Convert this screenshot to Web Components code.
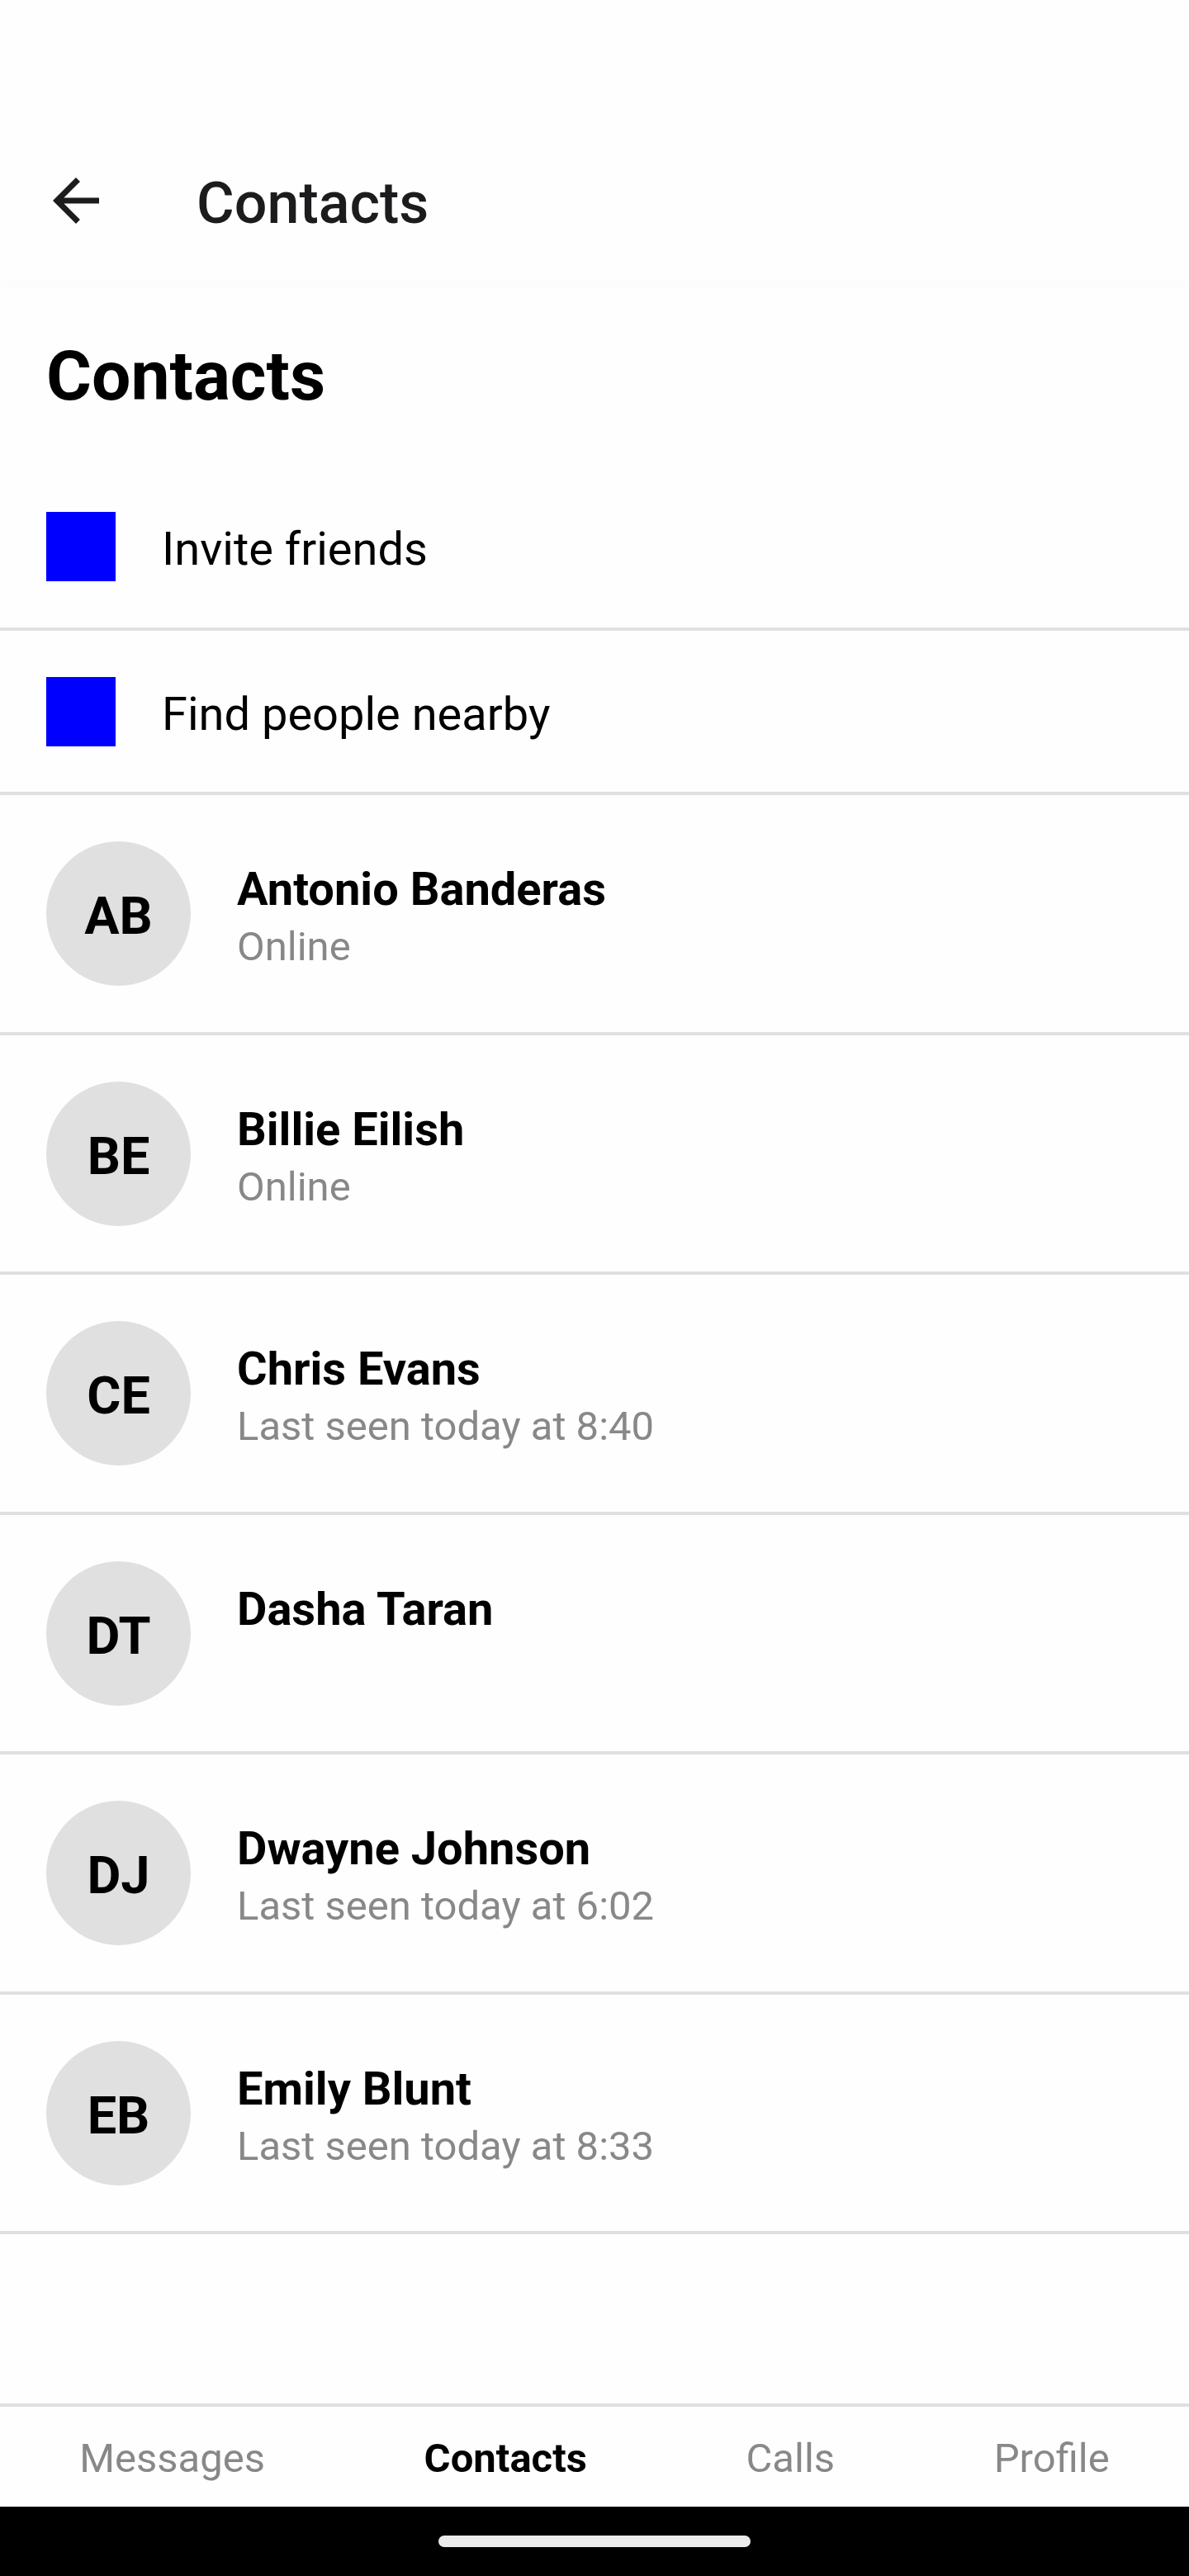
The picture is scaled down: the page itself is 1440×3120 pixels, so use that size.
<!DOCTYPE html>
<html lang="en">
<head>
<meta charset="utf-8">
<meta name="viewport" content="width=device-width, initial-scale=1">
<title>Contacts</title>
<style>
  body {
    margin: 0;
    background: #fefefe;
    color: #000;
    font-family: Roboto, "Liberation Sans", sans-serif;
    --line: #e0e0e0;
    --muted: #888;
    --gap: 56px;
  }
</style>
</head>
<body>
<app-screen>
  <app-header slot="header">Contacts</app-header>
  <contact-list heading="Contacts">
    <action-row>Invite friends</action-row>
    <action-row>Find people nearby</action-row>
    <contact-row initials="AB" name="Antonio Banderas">Online</contact-row>
    <contact-row initials="BE" name="Billie Eilish">Online</contact-row>
    <contact-row initials="CE" name="Chris Evans">Last seen today at 8:40</contact-row>
    <contact-row initials="DT" name="Dasha Taran"></contact-row>
    <contact-row initials="DJ" name="Dwayne Johnson">Last seen today at 6:02</contact-row>
    <contact-row initials="EB" name="Emily Blunt">Last seen today at 8:33</contact-row>
  </contact-list>
  <tab-bar slot="footer">
    <tab-item href="#messages">Messages</tab-item>
    <tab-item href="#contacts" active>Contacts</tab-item>
    <tab-item href="#calls">Calls</tab-item>
    <tab-item href="#profile">Profile</tab-item>
  </tab-bar>
  <gesture-bar slot="footer"></gesture-bar>
</app-screen>

<script>
  class BaseElement extends HTMLElement {
    connectedCallback() {
      if (!this.shadowRoot) {
        this.attachShadow({ mode: "open" }).innerHTML = this.render();
      }
    }
  }

  customElements.define("app-screen", class extends BaseElement {
    render() {
      return `
        <style>
          :host { display: flex; flex-direction: column; min-height: 100vh; }
          main { flex: 1; }
        </style>
        <slot name="header"></slot>
        <main><slot></slot></main>
        <slot name="footer"></slot>`;
    }
  });

  customElements.define("app-header", class extends BaseElement {
    render() {
      return `
        <style>
          :host { display: block; box-shadow: 0 4px 16px rgba(0, 0, 0, .02); color: #1c1c1e; }
          header { display: flex; align-items: center; gap: 104px; min-height: 194px; padding: 146px 50px 0; }
          button { display: flex; padding: 0; border: 0; background: none; color: inherit; }
          svg { width: 84px; height: 84px; fill: currentColor; }
          .title { padding-top: 6px; font-size: 70px; font-weight: 500; line-height: 84px; }
        </style>
        <header>
          <button type="button" aria-label="Back">
            <svg viewBox="0 0 24 24" aria-hidden="true"><path d="M20 11H7.83l5.59-5.59L12 4l-8 8 8 8 1.41-1.41L7.83 13H20z"/></svg>
          </button>
          <div class="title"><slot></slot></div>
        </header>`;
    }
  });

  customElements.define("contact-list", class extends BaseElement {
    render() {
      return `
        <style>
          :host { display: block; }
          h1 { margin: 0; padding: 56px var(--gap) 48px; font-size: 84px; font-weight: 700; line-height: 120px; }
          /* two rows together span an odd number of pixels */
          ::slotted(:nth-child(even)) { --row-bottom: 55px; }
        </style>
        <h1>${this.getAttribute("heading")}</h1>
        <section><slot></slot></section>`;
    }
  });

  customElements.define("action-row", class extends BaseElement {
    render() {
      return `
        <style>
          :host { display: block; border-bottom: 4px solid var(--line); }
          button {
            display: flex; align-items: center; gap: var(--gap); width: 100%;
            padding: 56px var(--gap) var(--row-bottom, 56px);
            border: 0; background: none; color: inherit; font: inherit; text-align: left;
          }
          .icon { width: 84px; height: 84px; background: #00f; }
          .label { height: 84px; box-sizing: border-box; padding-top: 6px; font-size: 56px; line-height: 78px; }
        </style>
        <button type="button">
          <span class="icon"></span>
          <span class="label"><slot></slot></span>
        </button>`;
    }
  });

  customElements.define("contact-row", class extends BaseElement {
    render() {
      return `
        <style>
          :host {
            display: flex; align-items: center; gap: var(--gap);
            padding: 56px var(--gap) var(--row-bottom, 56px);
            border-bottom: 4px solid var(--line);
          }
          .avatar {
            display: flex; align-items: center; justify-content: center; flex: none;
            box-sizing: border-box; width: 175px; height: 175px; padding-top: 6px;
            border-radius: 50%; background: #e0e0e0; font-size: 63px; font-weight: 700; line-height: 78px;
          }
          .name { font-size: 56px; font-weight: 700; line-height: 80px; }
          .status { min-height: 60px; color: var(--muted); font-size: 49px; line-height: 60px; }
        </style>
        <div class="avatar">${this.getAttribute("initials")}</div>
        <div>
          <div class="name">${this.getAttribute("name")}</div>
          <div class="status"><slot></slot></div>
        </div>`;
    }
  });

  customElements.define("tab-bar", class extends BaseElement {
    render() {
      return `
        <style>
          :host { display: block; border-top: 4px solid var(--line); }
          nav { display: flex; justify-content: space-around; padding: 28px 0 24px; }
        </style>
        <nav><slot></slot></nav>`;
    }
  });

  customElements.define("tab-item", class extends BaseElement {
    render() {
      return `
        <style>
          :host { display: block; color: var(--muted); font-size: 49px; line-height: 69px; }
          :host([active]) { color: #000; font-weight: 700; }
          a { display: block; color: inherit; text-decoration: none; }
        </style>
        <a href="${this.getAttribute("href")}"><slot></slot></a>`;
    }
  });

  customElements.define("gesture-bar", class extends BaseElement {
    render() {
      return `
        <style>
          :host { display: flex; justify-content: center; padding: 35px 0; background: #000; }
          .pill { width: 378px; height: 14px; border-radius: 7px; background: #ebebeb; }
        </style>
        <div class="pill"></div>`;
    }
  });
</script>
</body>
</html>
